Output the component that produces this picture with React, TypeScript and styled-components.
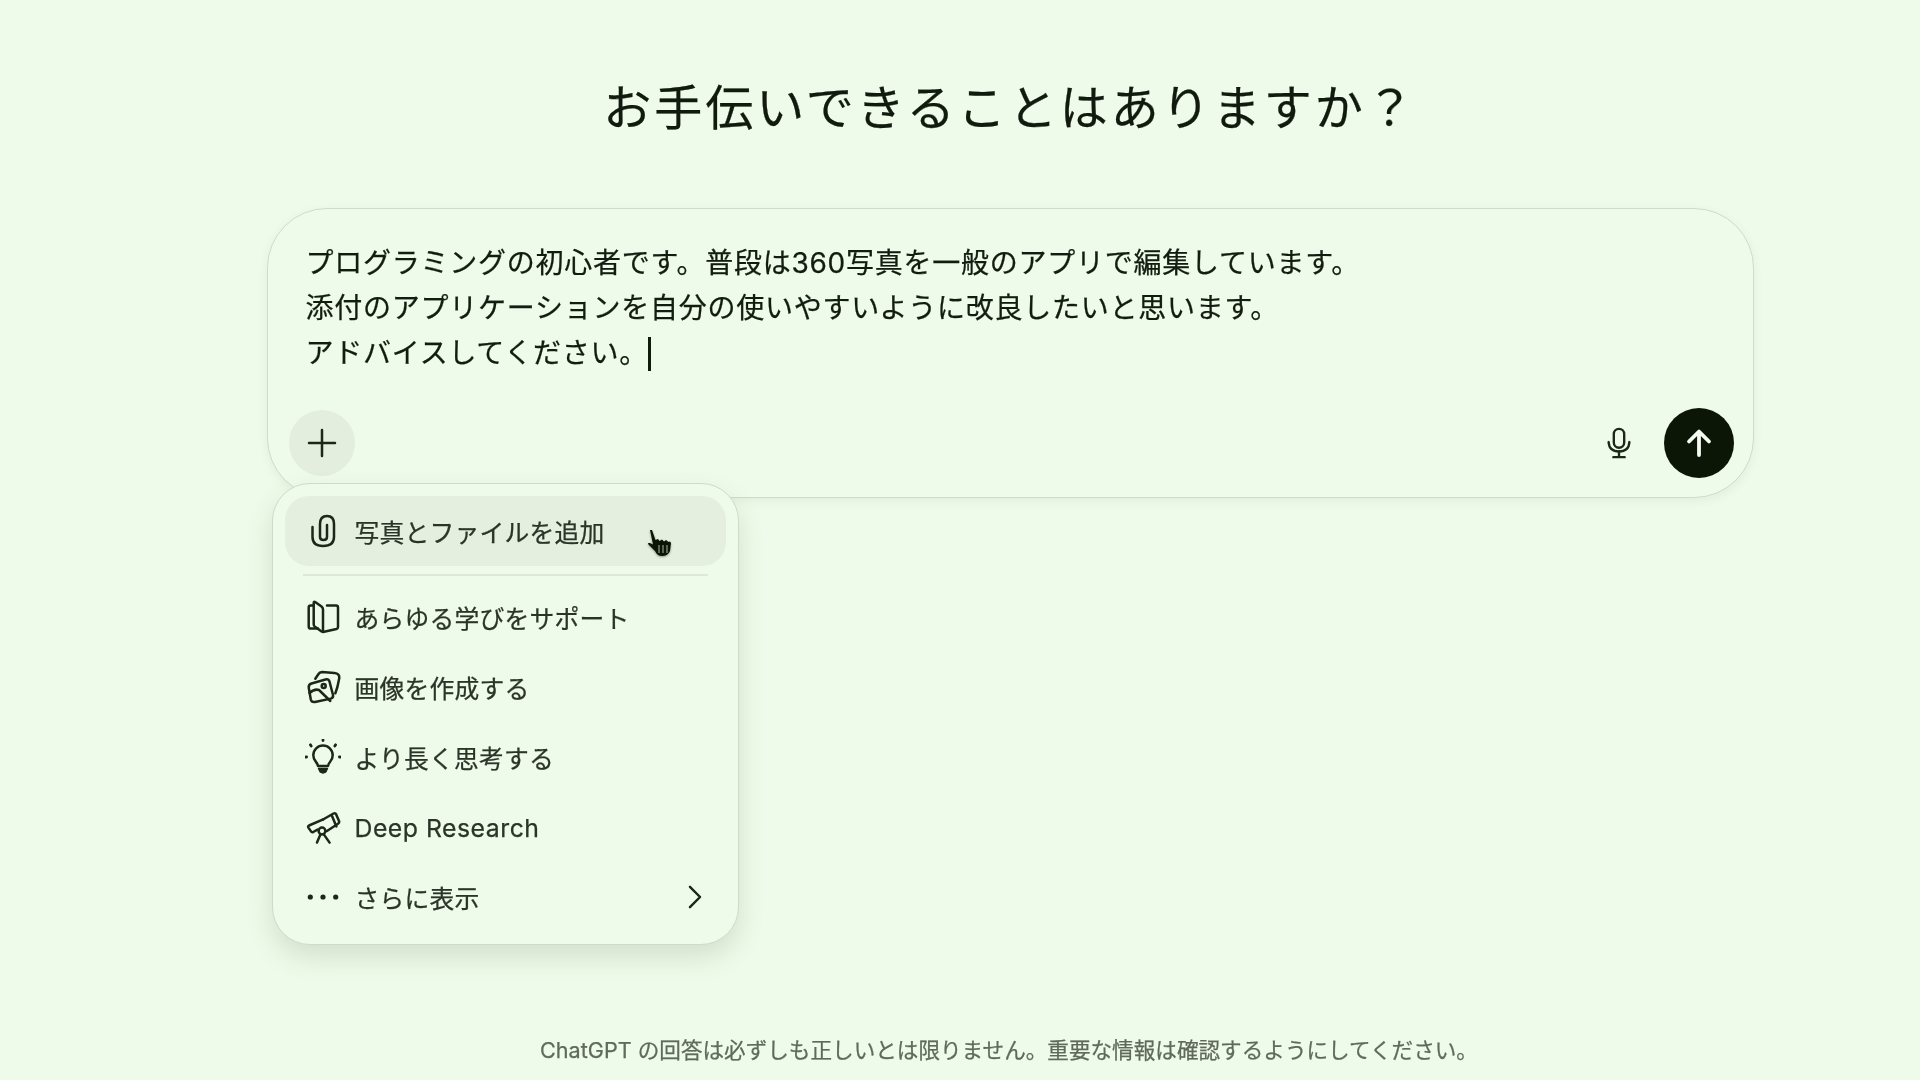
import React from "react";
import styled, { createGlobalStyle } from "styled-components";

const Global = createGlobalStyle`
  html, body { margin: 0; padding: 0; background: #effbea; }
  * { box-sizing: border-box; }
`;

const FONT = `"Inter", "Noto Sans CJK JP", sans-serif`;

const Page = styled.div`
  width: 1920px;
  height: 1080px;
  overflow: hidden;
  background: #effbea;
  padding-left: 96px;
  display: flex;
  flex-direction: column;
  align-items: center;
  font-family: ${FONT};
  color: #0d170b;
  filter: blur(0.35px);
  -webkit-text-stroke: 0.25px currentColor;
`;

const Title = styled.h1`
  margin: 76px 0 0 4px;
  font-size: 48px;
  line-height: 64px;
  font-weight: 400;
  letter-spacing: 3px;
  color: #101a0e;
`;

const Composer = styled.div`
  position: relative;
  width: 1487px;
  height: 290px;
  margin: 68px 0 0 4px;
  padding: 32px 19px 19px 21px;
  display: flex;
  flex-direction: column;
  justify-content: space-between;
  background: #effbea;
  border: 1.5px solid #d0dccb;
  border-radius: 60px;
  box-shadow: 0 3px 10px rgba(60, 90, 50, 0.08);
`;

const Prompt = styled.div`
  padding-left: 17px;
  font-size: 28px;
  line-height: 45px;
  letter-spacing: 0.75px;
  color: #121c10;
`;

const Line = styled.div`
  display: flex;
  align-items: center;
  white-space: pre;
`;

const Caret = styled.span`
  display: inline-block;
  width: 3px;
  height: 34px;
  background: #101a0e;
`;

const Toolbar = styled.div`
  display: flex;
  align-items: center;
  justify-content: space-between;
`;

const Actions = styled.div`
  display: flex;
  align-items: center;
  gap: 28px;
`;

const PlusButton = styled.div`
  width: 66px;
  height: 66px;
  border-radius: 50%;
  background: #e3eede;
  display: flex;
  align-items: center;
  justify-content: center;
`;

const SendButton = styled.div`
  width: 70px;
  height: 70px;
  border-radius: 50%;
  background: #0b1606;
  display: flex;
  align-items: center;
  justify-content: center;
`;

const Menu = styled.div`
  position: absolute;
  left: 4px;
  top: 274px;
  width: 467px;
  height: 462px;
  padding: 12px 12px 0;
  background: #effbea;
  border: 1.5px solid #cfdbca;
  border-radius: 38px;
  box-shadow: 0 12px 26px rgba(60, 90, 50, 0.16);
`;

const Row = styled.div<{ $active?: boolean }>`
  position: relative;
  height: ${(p) => (p.$active ? 70 : 69.8)}px;
  padding: 0 18px 0 20px;
  display: flex;
  align-items: center;
  gap: 14px;
  border-radius: 24px;
  background: ${(p) => (p.$active ? "#e4efdf" : "transparent")};
  font-size: 24.8px;
  letter-spacing: 0.2px;
  color: #2a3428;
`;

const RowIcon = styled.span`
  width: 36px;
  height: 36px;
  flex: none;
  display: flex;
  align-items: center;
  justify-content: center;
`;

const RowLabel = styled.span<{ $latin?: boolean }>`
  flex: 1;
  white-space: nowrap;
  padding-top: ${(p) => (p.$latin ? 2 : 0)}px;
  letter-spacing: ${(p) => (p.$latin ? 0.5 : 0.2)}px;
`;

const Divider = styled.div`
  height: 1.5px;
  margin: 8px 18px 7px;
  background: #dde8d8;
`;

const HandCursor = styled.svg`
  position: absolute;
  left: 360px;
  top: 33px;
  filter: drop-shadow(0 1px 1px rgba(0, 0, 0, 0.35));
`;

const Footer = styled.div`
  position: absolute;
  left: 98px;
  right: 0;
  top: 1036px;
  text-align: center;
  font-size: 21.6px;
  line-height: 28px;
  color: #5f6a5c;
`;

type IconProps = { size?: number; color?: string; width?: number; children: React.ReactNode };

const Svg = ({ size = 36, color = "#1c261a", width = 2.5, children }: IconProps) => (
  <svg
    width={size}
    height={size}
    viewBox="0 0 36 36"
    fill="none"
    stroke={color}
    strokeWidth={width}
    strokeLinecap="round"
    strokeLinejoin="round"
  >
    {children}
  </svg>
);

const items = [
  {
    label: "あらゆる学びをサポート",
    icon: (
      <Svg>
        <path d="M8.7 4 Q8.7 2 10.5 3.2 L16.5 7.6 Q18 8.8 18 10.5 V31.5 Q18 33.5 16.2 32.2 L10 27.8 Q8.7 26.8 8.7 25.2 Z" />
        <path d="M22 6.5 H31 Q33 6.5 33 8.5 V28 Q33 29.6 31.5 30 L18 33" />
        <path d="M8.7 6.5 H5.7 Q3.7 6.5 3.7 8.5 V27.5 Q3.7 29.6 5.8 29.6 H13" />
      </Svg>
    ),
  },
  {
    label: "画像を作成する",
    icon: (
      <Svg>
        <path d="M6.5 14.5 L20.5 10.5 Q23.5 9.8 24.5 12.5 L28 26 Q28.6 28.8 25.8 29.6 L10 33 Q6.5 33.5 5.8 30.5 L3.8 19 Q3.2 15.5 6.5 14.5 Z" />
        <path d="M10.3 9.7 L13.5 5 Q14.6 3.2 17 3 L29.5 4 Q34.6 4.5 34.3 9 L32.4 18 L30.3 24.3" />
        <circle cx="18.7" cy="17" r="2" />
        <path d="M4.5 24 Q9.5 19.5 14 21 L25.3 32" />
      </Svg>
    ),
  },
  {
    label: "より長く思考する",
    icon: (
      <Svg>
        <path d="M13 27 Q12.5 24.5 11 23 A9.7 9.7 0 1 1 25 23 Q23.5 24.5 23 27 Z" />
        <path d="M13.5 29.5 H22.5 L20.8 33 Q18 35 15.2 33 Z" fill="#1c261a" strokeWidth="1.4" />
        <path d="M18 .8 V1.6 M5.4 5.8 L6.2 7 M30.6 5.8 L29.8 7 M.8 18 H1.6 M34.4 18 H35.2" strokeWidth="2.8" />
      </Svg>
    ),
  },
  {
    label: "Deep Research",
    latin: true,
    icon: (
      <Svg>
        <path d="M18 10.5 L28.5 4.5 Q30.3 3.6 31.2 5.4 L34 12 Q34.6 13.8 33 14.8 L22 22" />
        <path d="M26.8 6.5 L31.4 17.4" />
        <path d="M18.2 10.4 L4 16.5 Q2.6 17.2 3.4 18.6 L6 22.4 Q6.8 23.6 8.2 23 L12.5 20.6" />
        <circle cx="17" cy="22" r="3.4" />
        <path d="M15.4 25.6 L12 33.6 M18.8 25.4 L24.6 33.6" />
      </Svg>
    ),
  },
];

export default function App() {
  return (
    <Page>
      <Global />
      <Title>お手伝いできることはありますか？</Title>
      <Composer>
        <Prompt>
          <Line>プログラミングの初心者です。普段は360写真を一般のアプリで編集しています。</Line>
          <Line>添付のアプリケーションを自分の使いやすいように改良したいと思います。</Line>
          <Line>
            アドバイスしてください。
            <Caret />
          </Line>
        </Prompt>
        <Toolbar>
          <PlusButton>
            <Svg size={36}>
              <path d="M18 5 V31 M5 18 H31" />
            </Svg>
          </PlusButton>
          <Actions>
            <Svg size={34} width={2.5}>
              <rect x="12.5" y="3" width="11" height="20" rx="5.5" />
              <path d="M7 17 Q7.5 27 18 27 Q28.5 27 29 17" />
              <path d="M18 27 V33 M12 33 H24" />
            </Svg>
            <SendButton>
              <Svg size={36} color="#f5fbf2" width={3.8}>
                <path d="M18 30 V7 M8 16.5 L18 6.5 L28 16.5" />
              </Svg>
            </SendButton>
          </Actions>
        </Toolbar>
        <Menu>
          <Row $active>
            <RowIcon>
              <Svg>
                <path d="M7.5 14 V24 Q7.5 33 18 33 Q29 33 29 24 V11 Q29 3 22 3 Q15 3 15 11 V24 Q15 27 18.5 27 Q22 27 22 24 V12" />
              </Svg>
            </RowIcon>
            <RowLabel>写真とファイルを追加</RowLabel>
            <HandCursor width="30" height="30" viewBox="0 0 30 30">
              <path
                d="M5 1 L7 1 L10.5 11 L13 10 L14.5 12 L17 10.5 L19 12.5 L21 11 L23.5 13 L25 12.5 L26 14 L25 22 Q23 27 17 27 Q12 27 10 22 L3 15 Q2.5 13.5 5 14 L8 15.5 Z"
                fill="#0c1408"
              />
              <path d="M14 16 V24 M18 16 V24 M22 16 V24" stroke="#8f9c8a" strokeWidth="1.2" />
            </HandCursor>
          </Row>
          <Divider />
          {items.map((it) => (
            <Row key={it.label}>
              <RowIcon>{it.icon}</RowIcon>
              <RowLabel $latin={it.latin}>{it.label}</RowLabel>
            </Row>
          ))}
          <Row>
            <RowIcon>
              <Svg>
                <circle cx="5.3" cy="18" r="2.6" fill="#1c261a" stroke="none" />
                <circle cx="18" cy="18" r="2.6" fill="#1c261a" stroke="none" />
                <circle cx="30.7" cy="18" r="2.6" fill="#1c261a" stroke="none" />
              </Svg>
            </RowIcon>
            <RowLabel>さらに表示</RowLabel>
            <Svg size={26} width={3.4}>
              <path d="M11 4 L25 18 L11 32" />
            </Svg>
          </Row>
        </Menu>
      </Composer>
      <Footer>ChatGPT の回答は必ずしも正しいとは限りません。重要な情報は確認するようにしてください。</Footer>
    </Page>
  );
}
